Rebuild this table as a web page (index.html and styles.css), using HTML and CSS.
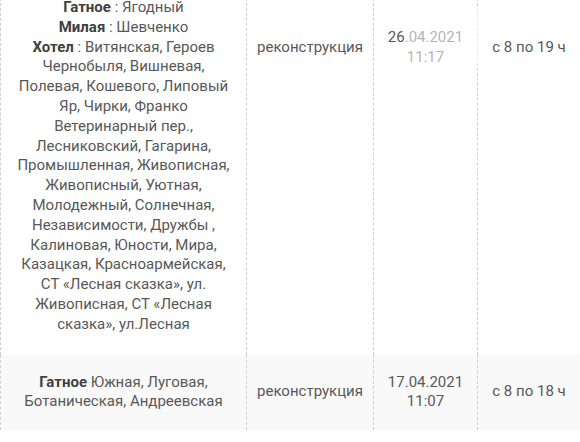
FILE: index.html
```html
<!DOCTYPE html>
<html lang="ru">
<head>
<meta charset="utf-8">
<link rel="stylesheet" href="styles.css">
</head>
<body>
<table class="tbl">
  <colgroup>
    <col class="c1"><col class="c2"><col class="c3"><col class="c4">
  </colgroup>
  <tr class="row long">
    <td class="addr"><b>Гатное</b> : Ягодный<br><b>Милая</b> : Шевченко<br><b>Хотел</b> : Витянская, Героев Чернобыля, Вишневая, Полевая, Кошевого, Липовый Яр, Чирки, Франко Ветеринарный пер., Лесниковский, Гагарина, Промышленная, Живописная, Живописный, Уютная, Молодежный, Солнечная, Независимости, Дружбы , Калиновая, Юности, Мира, Казацкая, Красноармейская, СТ «Лесная сказка», ул. Живописная, СТ «Лесная сказка», ул.Лесная</td>
    <td class="side single">реконструкция</td>
    <td class="side date">26.04.2021<br>11:17<span class="fade"></span></td>
    <td class="side single">с 8 по 19 ч</td>
  </tr>
  <tr class="row alt">
    <td class="addr"><b>Гатное</b> Южная, Луговая, Ботаническая, Андреевская</td>
    <td>реконструкция</td>
    <td>17.04.2021<br>11:07</td>
    <td>с 8 по 18 ч</td>
  </tr>
</table>
</body>
</html>
```

FILE: styles.css
```css
html, body {
  margin: 0;
  padding: 0;
  background: #fff;
  overflow: hidden;
}
body {
  font-family: Roboto, "Liberation Sans", Arial, sans-serif;
  font-size: 15px;
  line-height: 19.8px;
  color: #585858;
}
.tbl {
  width: 580px;
  border-collapse: collapse;
  table-layout: fixed;
  margin-top: -22px;
}
.c1 { width: 246px; }
.c2 { width: 127px; }
.c3 { width: 104px; }
.c4 { width: 103px; }
.tbl td {
  border-left: 1px dashed #cfcfcf;
  border-right: 1px dashed #cfcfcf;
  text-align: center;
  vertical-align: middle;
  padding: 18px 4px;
}
.tbl td.addr {
  padding: 18px 12px;
}
.row.long td.addr {
  padding: 20px 12px;
}
.tbl b {
  color: #404040;
  font-weight: 700;
}
.row.long td.side {
  vertical-align: top;
  padding-top: 50px;
}
.row.long td.side.single {
  padding-top: 60px;
}
.row.alt td {
  background: #f9f9f9;
}
.date {
  position: relative;
}
.fade {
  position: absolute;
  left: 31px;
  top: 28px;
  width: 80px;
  height: 60px;
  background: rgba(255, 255, 255, 0.55);
}
```
